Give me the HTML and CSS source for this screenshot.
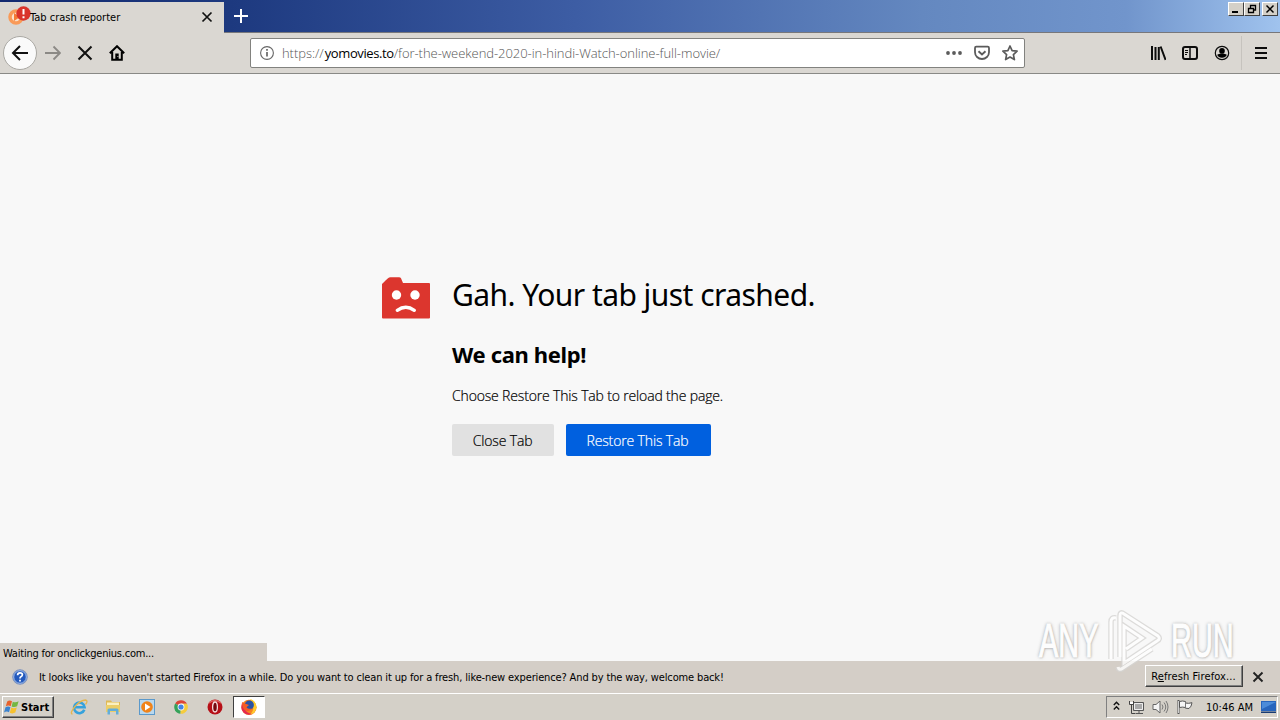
FILE: index.html
```html
<!DOCTYPE html>
<html lang="en">
<head>
    <meta charset="UTF-8">
    <meta name="viewport" content="width=device-width, initial-scale=1.0">
    <title>Tab crash reporter</title>
    <link rel="stylesheet" href="styles.css">
</head>
<body>

<header class="titlebar">
    <div class="tab">
        <svg class="favicon" width="24" height="24" viewBox="0 0 24 24">
            <circle cx="9" cy="14" r="6" fill="#fbe3cc" stroke="#f99a58" stroke-width="3.500"/>
            <path d="M7 10l6 4-6 4z" fill="#f47a35"/>
            <circle cx="16.500" cy="10.500" r="7.200" fill="#d9342b"/>
            <path d="M16.500 6v5.500M16.500 13.300v2" stroke="#fff" stroke-width="2"/>
        </svg>
        <span class="tab-title">Tab crash reporter</span>
        <svg class="tab-close" width="12" height="12" viewBox="0 0 12 12"><path d="M1.500 1.500l9 9M10.500 1.500l-9 9" stroke="#111" stroke-width="1.700"/></svg>
    </div>
    <svg class="new-tab" width="16" height="16" viewBox="0 0 16 16"><path d="M8 1v14M1 8h14" stroke="#fff" stroke-width="2"/></svg>
    <div class="window-buttons">
        <button class="win-btn"><svg width="14" height="12"><path d="M3 9h6" stroke="#000" stroke-width="2"/></svg></button>
        <button class="win-btn"><svg width="14" height="12"><path d="M5.500 5V2.500h5v4.500H9M5 2.500h6M3.500 5.500h5v4h-5zM3 5.500h6" fill="none" stroke="#000" stroke-width="1.300"/></svg></button>
        <button class="win-btn win-close"><svg width="14" height="12"><path d="M3.500 2.500l7 7M10.500 2.500l-7 7" stroke="#000" stroke-width="1.500"/></svg></button>
    </div>
</header>

<nav class="toolbar">
    <div class="nav-buttons">
        <div class="back"><svg width="18" height="18" viewBox="0 0 18 18"><path d="M17 9H2M9 2L2 9l7 7" fill="none" stroke="#111" stroke-width="2"/></svg></div>
        <svg class="nav-icon" width="16" height="16" viewBox="0 0 16 16"><path d="M0 8h15M8.500 1.500L15 8l-6.500 6.500" fill="none" stroke="#8b8985" stroke-width="1.800"/></svg>
        <svg class="nav-icon" width="16" height="16" viewBox="0 0 16 16"><path d="M1.500 1.500l13 13M14.500 1.500l-13 13" stroke="#111" stroke-width="2"/></svg>
        <svg class="nav-icon" width="16" height="16" viewBox="0 0 16 16"><path d="M.8 8.200L8 1.200l7.200 7M3.200 7v7.800h9.600V7" fill="none" stroke="#000" stroke-width="2"/><path d="M6.300 8.500h3.400V15H6.300z"/><path d="M8.500 11.500h.8" stroke="#ddd"/></svg>
    </div>
    <div class="urlbar">
        <svg width="16" height="16" viewBox="0 0 16 16"><circle cx="8" cy="8" r="6.400" fill="none" stroke="#666" stroke-width="1.100"/><path d="M8 7v4.500M8 4v1.700" stroke="#666" stroke-width="1.700"/></svg>
        <span class="url">https://<b>yomovies.to</b>/for-the-weekend-2020-in-hindi-Watch-online-full-movie/</span>
        <div class="url-actions">
            <svg width="16" height="16" viewBox="0 0 16 16"><g fill="#5b5b5b"><circle cx="2" cy="8" r="1.900"/><circle cx="8" cy="8" r="1.900"/><circle cx="14" cy="8" r="1.900"/></g></svg>
            <svg width="16" height="16" viewBox="0 0 16 16"><path d="M2.300 1.700h11.400q1.300 0 1.300 1.300v4.200a7 6.800 0 0 1-14 0V3q0-1.300 1.300-1.300z" fill="none" stroke="#5b5b5b" stroke-width="1.800"/><path d="M4.500 6.200L8 9.500l3.500-3.300" fill="none" stroke="#5b5b5b" stroke-width="1.900"/></svg>
            <svg width="16" height="16" viewBox="0 0 16 16"><path d="M8 1l2.100 4.600 5 .6-3.700 3.400 1 5L8 12.100l-4.400 2.500 1-5L.9 6.200l5-.6z" fill="none" stroke="#5b5b5b" stroke-width="1.700" stroke-linejoin="round"/></svg>
        </div>
    </div>
    <div class="tools">
        <svg width="16" height="16" viewBox="0 0 16 16"><path d="M2 1v14M5.500 2v13M8.800 2v13M10.600 1.500L15.600 15" stroke="#0c0c0c" stroke-width="2"/></svg>
        <svg width="16" height="16" viewBox="0 0 16 16"><rect x="1" y="2" width="14" height="12" rx="2" fill="none" stroke="#0c0c0c" stroke-width="2"/><path d="M8 2v12" stroke="#0c0c0c" stroke-width="1.500"/><path d="M3 5.500h3M3 7.500h3M3 9.500h2" stroke="#0c0c0c"/></svg>
        <svg width="16" height="16" viewBox="0 0 16 16"><circle cx="8" cy="8" r="6.700" fill="none" stroke="#0c0c0c" stroke-width="1.200"/><circle cx="8" cy="5.900" r="2.800"/><path d="M3.200 9.800q2-1 2.800-1h4q.8 0 2.800 1A5 4.200 0 0 1 3.200 9.800z"/></svg>
    </div>
    <div class="menu"><svg width="12" height="14" viewBox="0 0 12 14"><path d="M0 2h12M0 7h12M0 12h12" stroke="#0c0c0c" stroke-width="2"/></svg></div>
</nav>

<main class="page">
    <div class="crash">
        <svg class="crash-icon" width="50" height="44" viewBox="0 0 50 44">
            <path d="M1 8l3.500-3.500L7 2.300Q8 1.300 9.500 1.300h8.500q1.500 0 2 1l2 4.700H48q1 0 1 1v33.500q0 1-1 1H2q-1 0-1-1z" fill="#dc362e"/>
            <circle cx="15.500" cy="19" r="4.700" fill="#fff"/><circle cx="34" cy="19" r="4.700" fill="#fff"/>
            <path d="M16.300 34.300q8.500-6 17 0" fill="none" stroke="#fff" stroke-width="3.400" stroke-linecap="round"/>
        </svg>
        <div class="crash-text">
            <h1>Gah. Your tab just crashed.</h1>
            <h2>We can help!</h2>
            <p>Choose Restore This Tab to reload the page.</p>
            <div class="crash-buttons">
                <button class="btn btn-close"><span>Close Tab</span></button>
                <button class="btn btn-restore"><span>Restore This Tab</span></button>
            </div>
        </div>
    </div>
    <div class="status">Waiting for onclickgenius.com...</div>
</main>

<div class="notification">
    <svg class="help" width="16" height="16" viewBox="0 0 16 16"><circle cx="8" cy="8" r="7.300" fill="#2359bd" stroke="#889abf"/><circle cx="8" cy="8" r="6.300" fill="none" stroke="#c8d9f4" stroke-width=".8"/><path d="M5.600 6.200q0-2.400 2.400-2.400t2.400 2q0 1.200-1.500 2-.9.500-.9 1.700M8 10.800v1.700" fill="none" stroke="#fff" stroke-width="1.700"/></svg>
    <span class="notice">It looks like you haven't started Firefox in a while. Do you want to clean it up for a fresh, like-new experience? And by the way, welcome back!</span>
    <button class="refresh"><span>R<u>e</u>fresh Firefox...</span></button>
    <svg class="notice-close" width="12" height="12" viewBox="0 0 12 12"><path d="M1.500 1.500l9 9M10.500 1.500l-9 9" stroke="#222" stroke-width="1.900"/></svg>
</div>

<footer class="taskbar">
    <button class="start">
        <svg width="16" height="16" viewBox="0 0 16 16"><path d="M3.200 2.500Q5.500.7 8 2.300L6.700 7.200Q4.300 5.800 1.800 7.300z" fill="#e8622c"/><path d="M8.800 2.700q2.700 1.300 5.800-.4l-1.500 5q-2.700 1.500-5.500.2z" fill="#75b743"/><path d="M1.500 8.300Q4 6.800 6.400 8.200L5 13.200Q2.500 11.800 0 13.500z" fill="#3b83cf"/><path d="M7.300 8.600q2.600 1.300 5.500-.2l-1.500 5.200q-2.800 1.500-5.500.1z" fill="#f6c12f"/></svg>
        <span>Start</span>
    </button>
    <div class="pinned">
        <svg width="18" height="18" viewBox="0 0 18 18"><path d="M14.300 11.700A5.300 5.300 0 1 1 14.600 9.300H5" fill="none" stroke="#36a2dc" stroke-width="2.600"/><path d="M2.500 16q-3-.5 2-7 6-7 11-7 3 .5 0 4.500" fill="none" stroke="#e4b650" stroke-width="1.300"/></svg>
        <svg width="18" height="18" viewBox="0 0 18 18"><path d="M2 2.500h5l1 1.500h8v9H2z" fill="#dfb955"/><path d="M3 4.500h12v4H3z" fill="#fbf0c0"/><path d="M2 7h14v7H2z" fill="#ecce68"/><path d="M3.500 16.500V12q0-1.500 1.500-1.500h8q1.500 0 1.500 1.500v4.500H12v-3.500H6v3.500z" fill="#63add9"/></svg>
        <svg width="18" height="18" viewBox="0 0 18 18"><rect x="1.500" y="1.500" width="15" height="15" fill="#b9d8ee" stroke="#5b99cb"/><circle cx="9" cy="9" r="5.800" fill="#f08319"/><path d="M7 5.500l5.500 3.500L7 12.500z" fill="#fff"/></svg>
        <svg width="18" height="18" viewBox="0 0 18 18"><path d="M9 9L3.200 5.500A6.800 6.800 0 0 1 15 5.800H9z" fill="#dc4437"/><path d="M9 9L8.500 15.800A6.800 6.800 0 0 1 3.200 5.500z" fill="#35a25a"/><path d="M9 9V5.800h6A6.800 6.800 0 0 1 8.500 15.800z" fill="#f5cc3d"/><circle cx="9" cy="9" r="3.400" fill="#fff"/><circle cx="9" cy="9" r="2.600" fill="#4284e5"/></svg>
        <svg width="18" height="18" viewBox="0 0 18 18"><circle cx="9" cy="9" r="7.500" fill="#b60f17"/><path d="M3 5q6-5 12 0" fill="none" stroke="#df6260" stroke-width="1.500"/><ellipse cx="9" cy="9" rx="2.400" ry="5" fill="#760910" stroke="#f4dddd" stroke-width="1.300"/></svg>
    </div>
    <div class="running">
        <svg width="18" height="18" viewBox="0 0 18 18"><circle cx="9" cy="9.300" r="7.600" fill="#f58220"/><path d="M10 1q6.500 2 6.500 8.500-1 6-7 7 4-3 3.800-7Q13 5 10 1z" fill="#ffcb2d"/><path d="M2 5q-2 6 2 10 4 3 8 1-6-1-8-6z" fill="#e52a4e"/><circle cx="9.300" cy="7" r="4.600" fill="#2a52a4"/><path d="M2 4l3 1.500L9 7 6.500 9.200q2 2.500 5.500 1-2 4-6 2.300Q2 11 2 4z" fill="#f55b26"/></svg>
    </div>
    <div class="tray">
        <svg class="chevrons" width="7" height="10" viewBox="0 0 7 10"><path d="M.8 4L3.500 1.300 6.200 4M.8 8.500l2.700-2.700 2.700 2.700" fill="none" stroke="#111" stroke-width="1.400"/></svg>
        <svg width="16" height="16" viewBox="0 0 16 16"><path d="M5.500 3.500h10v8h-10zM8 14.500h7M11 12v2" fill="#a9a9a9" stroke="#555"/><path d="M6.500 4.500h8v6h-8z" fill="none" stroke="#eee"/><path d="M1.500 2v3.500h4V2M3.500 6v8.500h4" fill="none" stroke="#444"/><path d="M2 3h3v2H2z" fill="#fff"/></svg>
        <svg width="17" height="16" viewBox="0 0 17 16"><path d="M1 5.500h3L8 2v12L4 10.500H1z" fill="#f4f4f4" stroke="#666"/><path d="M10 5.500q2 2.500 0 5M12 3.500q3.500 4.500 0 9M14 2q4 6 0 12" fill="none" stroke="#777"/></svg>
        <svg width="16" height="16" viewBox="0 0 16 16"><path d="M2.500 2.500q3-1 6 0v1.500q3 .8 6.500-.3-.5 4-3 5.800l-3.500-.3v-.7q-3-.8-6 0z" fill="#f6f6f6" stroke="#555"/><path d="M8.500 3v5.500" stroke="#777"/><path d="M1.500 1v14" stroke="#555" stroke-width="2"/><path d="M1.500 2v12" stroke="#eee" stroke-width=".8"/></svg>
        <span class="clock">10:46 AM</span>
        <svg class="desktop" width="16" height="16" viewBox="0 0 16 16"><path d="M0 2h15v10H0z" fill="#2765bd"/><path d="M1 3h14L1 10z" fill="#4b8bd9"/><path d="M0 12.500h15v1.500H0z" fill="#173b73"/></svg>
    </div>
</footer>

<div class="watermark">
    <span>ANY</span>
    <svg width="60" height="64" viewBox="0 0 60 64">
        <path class="mark-shade" d="M14 49V8q0-5 4-2l34 22q3 3-1 5L18 55V18l18 12-16 11M5 51V14q0-5 5-4M12 59q1 4 5 1l29-19"/>
        <path class="mark-line" d="M14 49V8q0-5 4-2l34 22q3 3-1 5L18 55V18l18 12-16 11M5 51V14q0-5 5-4M12 59q1 4 5 1l29-19"/>
    </svg>
    <span>RUN</span>
</div>

</body>
</html>
```

FILE: styles.css
```css
* {
    box-sizing: border-box;
}

body {
    margin: 0;
    width: 1280px;
    height: 720px;
    overflow: hidden;
    display: flex;
    flex-direction: column;
    position: relative;
    background: #f8f8f8;
    color: #000;
    font-family: "DejaVu Sans Condensed", "DejaVu Sans", sans-serif;
    font-stretch: condensed;
    font-size: 11px;
}

svg {
    display: block;
    flex: none;
}

button {
    font: inherit;
    color: inherit;
    padding: 0;
    margin: 0;
}

span {
    white-space: nowrap;
}

/* title bar */
.titlebar {
    height: 33px;
    flex: none;
    display: flex;
    align-items: flex-start;
    padding-top: 2px;
    background: linear-gradient(90deg, #12296f 0, #1d397f 18%, #3d5da4 45%, #6488c0 72%, #7195cc 88%, #a0c3ee 100%);
    border-bottom: 1px solid #77777b;
}

.tab {
    width: 224px;
    height: 31px;
    display: flex;
    align-items: center;
    background: #dad7d2;
}

.favicon {
    margin: -5px 0 0 7px;
}

.tab-title {
    margin-left: -1px;
}

.tab-close {
    margin-left: auto;
    margin-right: 11px;
    margin-top: -1px;
}

.new-tab {
    margin: 6px 0 0 9px;
}

.window-buttons {
    display: flex;
    margin-left: auto;
    margin-right: 2px;
}

.win-btn {
    width: 16px;
    height: 14px;
    background: #d4d0c8;
    border: 1px solid;
    border-color: #fff #404040 #404040 #fff;
}

.win-close {
    margin-left: 2px;
}

/* navigation */
.toolbar {
    height: 41px;
    flex: none;
    display: flex;
    align-items: center;
    background: #dad7d2;
    border-bottom: 1px solid #898986;
}

.nav-buttons {
    width: 250px;
    display: flex;
    align-items: center;
    gap: 16px;
    padding-left: 3px;
}

.back {
    width: 34px;
    height: 34px;
    margin-right: -8px;
    display: flex;
    align-items: center;
    justify-content: center;
    border: 1px solid #aaa8a3;
    border-radius: 50%;
    background: #fafafa;
}

.urlbar {
    width: 775px;
    height: 30px;
    display: flex;
    align-items: center;
    padding: 0 6px 0 8px;
    background: #fff;
    border: 1px solid #82827f;
    border-radius: 2px;
}

.url {
    margin-left: 7px;
    color: #555;
    font-family: "Open Sans", sans-serif;
    font-stretch: normal;
    font-size: 13px;
    font-weight: 300;
    letter-spacing: -0.05px;
}

.url b {
    margin-left: 1px;
    color: #000;
    font-weight: 400;
    letter-spacing: -0.4px;
}

.url-actions {
    margin-left: auto;
    display: flex;
    gap: 12px;
}

.tools {
    display: flex;
    gap: 16px;
    margin-left: 125px;
}

.menu {
    height: 34px;
    margin-left: 11px;
    padding-left: 13px;
    display: flex;
    align-items: center;
    border-left: 1px solid #c6c3be;
}

/* crashed page */
.page {
    flex: 1;
    display: flex;
    flex-direction: column;
    background: #f8f8f8;
}

.crash {
    display: flex;
    padding: 202px 0 0 381px;
    color: #000;
    font-family: "Open Sans", sans-serif;
    font-stretch: normal;
}

.crash-text {
    margin-left: 21px;
}

h1 {
    margin: 0;
    height: 36px;
    line-height: 37px;
    font-family: "Noto Sans", sans-serif;
    font-size: 30px;
    font-weight: 400;
    letter-spacing: -0.55px;
    white-space: nowrap;
}

h2 {
    margin: 28px 0 0;
    height: 28px;
    line-height: 28px;
    font-family: "Noto Sans", sans-serif;
    font-size: 22px;
    font-weight: 700;
    letter-spacing: -0.35px;
    white-space: nowrap;
}

p {
    margin: 18px 0 0;
    height: 20px;
    line-height: 20px;
    font-size: 14px;
    font-weight: 300;
    letter-spacing: -0.16px;
    white-space: nowrap;
    -webkit-text-stroke: 0.2px;
}

.crash-buttons {
    display: flex;
    gap: 12px;
    margin-top: 18px;
}

.btn {
    height: 32px;
    border: 0;
    border-radius: 2px;
    font-size: 14px;
    font-weight: 300;
    letter-spacing: -0.14px;
    -webkit-text-stroke: 0.2px;
}

.btn-close {
    width: 102px;
    padding-right: 1px;
    background: #e1e1e1;
}

.btn-restore {
    width: 145px;
    padding-right: 2px;
    background: #0060df;
    color: #fff;
}

.status {
    width: 267px;
    height: 18px;
    line-height: 21px;
    margin-top: auto;
    padding-left: 3px;
    background: #d4cec7;
    letter-spacing: -0.22px;
}

/* notification bar */
.notification {
    height: 32px;
    flex: none;
    display: flex;
    align-items: center;
    padding: 0 16px 0 12px;
    background: #d4cec7;
}

.notice {
    margin-left: 11px;
    letter-spacing: -0.14px;
}

.refresh {
    width: 98px;
    height: 22px;
    margin-left: auto;
    margin-top: -2px;
    padding-right: 1px;
    background: #d4d0c8;
    border: 1px solid;
    border-color: #fff #404040 #404040 #fff;
    box-shadow: inset -1px -1px #808080;
    letter-spacing: 0.12px;
}

.notice-close {
    margin-left: 9px;
}

/* taskbar */
.taskbar {
    height: 27px;
    flex: none;
    display: flex;
    align-items: center;
    padding: 0 2px;
    background: #d4d0c8;
    border-top: 1px solid #fff;
}

.start {
    width: 52px;
    height: 22px;
    display: flex;
    align-items: center;
    gap: 1px;
    padding-left: 1px;
    background: #d4d0c8;
    border: 1px solid;
    border-color: #fff #404040 #404040 #fff;
    box-shadow: inset -1px -1px #808080;
    font-weight: 700;
}

.pinned {
    display: flex;
    gap: 16px;
    margin-left: 16px;
}

.running {
    width: 32px;
    height: 22px;
    margin-left: 9px;
    display: flex;
    align-items: center;
    justify-content: center;
    background: #fff;
    border: 1px solid;
    border-color: #404040 #fff #fff #404040;
}

.tray {
    width: 172px;
    height: 22px;
    display: flex;
    align-items: center;
    margin-left: auto;
    padding-left: 6px;
    gap: 8px;
    border: 1px solid;
    border-color: #808080 #fff #fff #808080;
}

.chevrons {
    margin-bottom: 3px;
}

.clock {
    margin-left: 5px;
}

.desktop {
    margin-left: auto;
}

/* logo drawn over the lower right corner */
.watermark {
    position: absolute;
    left: 1039px;
    top: 608px;
    height: 64px;
    display: flex;
    align-items: center;
    opacity: 0.8;
    pointer-events: none;
}

.watermark span {
    width: 63px;
    font-family: "Liberation Sans", sans-serif;
    font-stretch: normal;
    font-size: 49px;
    line-height: 64px;
    color: #fff;
    -webkit-text-stroke: 1.2px #fff;
    text-shadow: 0 0 3px #999, 0 0 5px #aaa, 1px 1px 2px #bbb;
    transform: scaleX(0.59);
    transform-origin: left;
}

.watermark svg {
    margin-left: 4px;
    margin-right: 5px;
}

.mark-shade {
    fill: none;
    stroke: #d6d5d3;
    stroke-width: 5.5;
}

.mark-line {
    fill: none;
    stroke: #fff;
    stroke-width: 3;
}
```
